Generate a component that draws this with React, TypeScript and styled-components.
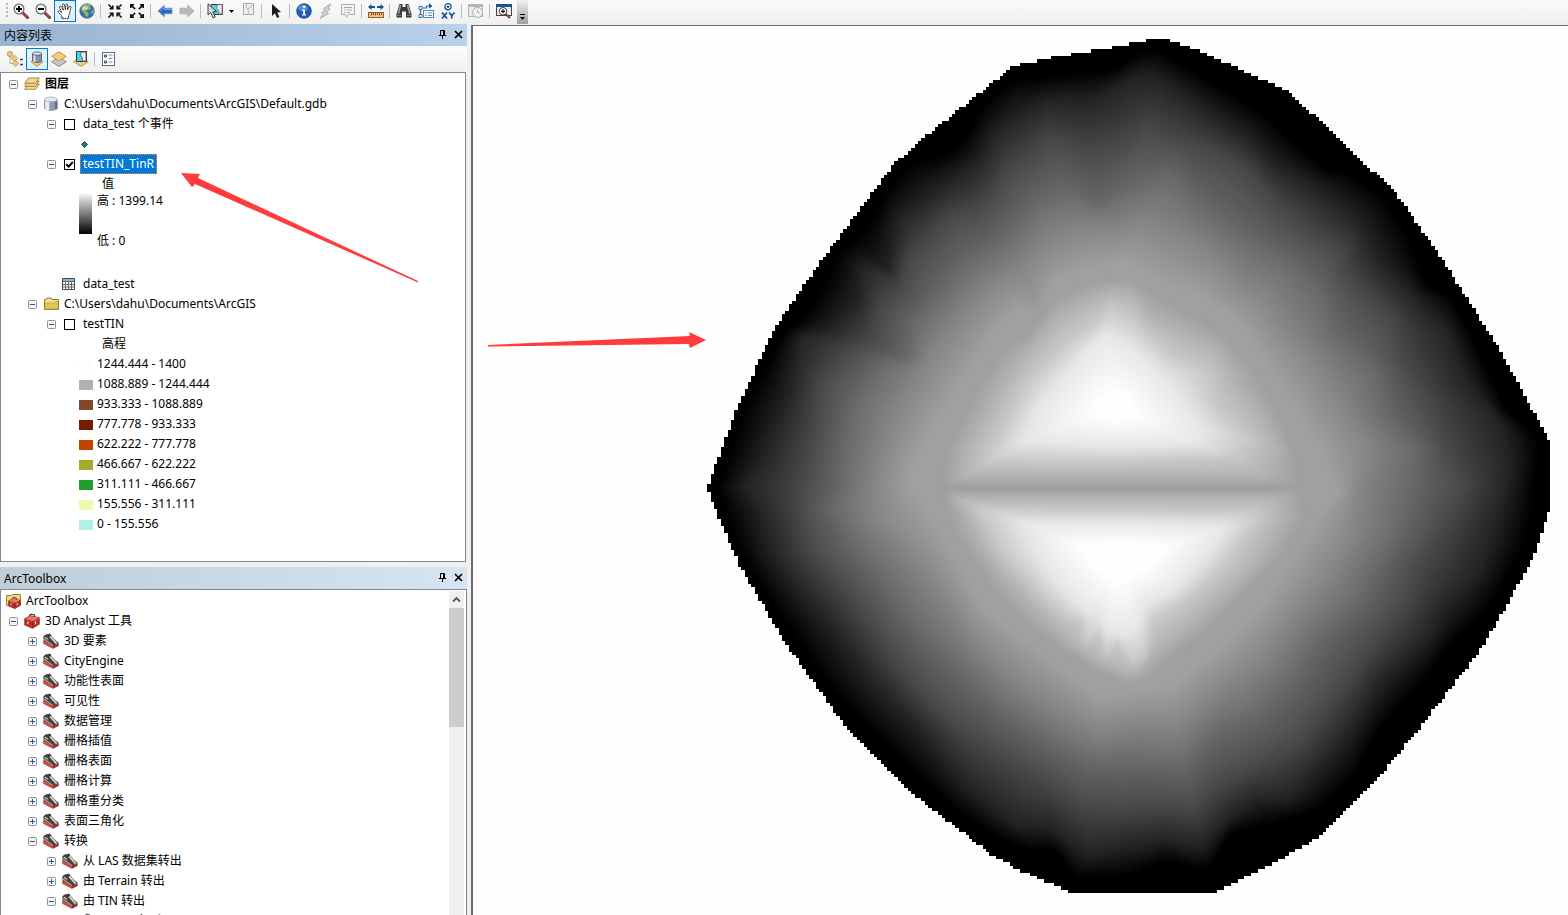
import React from "react";
import styled, { createGlobalStyle, css } from "styled-components";

const GlobalStyle = createGlobalStyle`
  * { box-sizing: border-box; }
  body {
    margin: 0;
    background: #f0f0f0;
    color: #000;
    font-family: "Noto Sans", "Noto Sans CJK SC", sans-serif;
    font-size: 12px;
    line-height: 20px;
  }
  button { font: inherit; color: inherit; }
`;

/* ---------- layout ---------- */

const Window = styled.div`
  display: flex;
  flex-direction: column;
  height: 100vh;
  overflow: hidden;
`;

const Toolbar = styled.div`
  display: flex;
  align-items: flex-start;
  flex: none;
  height: 24px;
  background: linear-gradient(#fafafa, #f0f0f0);
`;

const Workspace = styled.div`
  display: flex;
  flex: 1;
  min-height: 0;
`;

const Sidebar = styled.aside`
  position: relative;
  display: flex;
  flex-direction: column;
  flex: none;
  width: 467px;
`;

const MapFrame = styled.main`
  flex: 1;
  min-width: 0;
  margin: 1px 0 0 4px;
  border: solid #6b6b6b;
  border-width: 1px 0 0 2px;
  background: #fefefe;
  overflow: hidden;
`;

const MapDrawing = styled.svg`
  display: block;
  width: 100%;
`;

const Annotation = styled.svg`
  position: absolute;
  left: 180px;
  top: 148px;
  pointer-events: none;
`;

/* ---------- toolbar parts ---------- */

const Grip = styled.span`
  flex: none;
  width: 3px;
  height: 16px;
  margin: 3px 1px 0 6px;
  background: repeating-linear-gradient(#b4b4b4 0 2px, transparent 2px 4px);
  background-size: 2px 100%;
  background-repeat: no-repeat;
`;

const ToolButton = styled.button<{ $active?: boolean }>`
  display: flex;
  align-items: center;
  justify-content: center;
  flex: none;
  width: 22px;
  height: 22px;
  padding: 0;
  border: 1px solid transparent;
  background: transparent;
  ${(p) =>
    p.$active &&
    css`
      border-color: #0078d7;
      background: #e3eff9;
    `}
`;

const CaretButton = styled(ToolButton)`
  width: 11px;
`;

const Separator = styled.span`
  flex: none;
  width: 1px;
  height: 14px;
  margin: 4px 3px 0 2px;
  background: #bcbcbc;
`;

const Overflow = styled.button`
  display: flex;
  align-items: flex-end;
  justify-content: center;
  flex: none;
  width: 11px;
  height: 24px;
  margin-left: 2px;
  padding: 0 0 3px;
  border: 0;
  background: linear-gradient(#f0f0f0, #a0a0a0);
`;

/* ---------- panels ---------- */

const TitleBar = styled.header<{ $active?: boolean }>`
  display: flex;
  align-items: flex-start;
  flex: none;
  height: 22px;
  padding: 2px 1px 0 4px;
  background: ${(p) =>
    p.$active
      ? "linear-gradient(90deg, #99b4d1, #b9d1ea)"
      : "linear-gradient(90deg, #bfcddb, #d7e4f2)"};
`;

const Title = styled.h2`
  flex: 1;
  margin: 0;
  font-size: 12px;
  font-weight: 400;
`;

const TitleButton = styled.button`
  display: flex;
  align-items: center;
  justify-content: center;
  width: 16px;
  height: 17px;
  padding: 0;
  border: 0;
  background: transparent;
`;

const PanelTools = styled.div`
  display: flex;
  flex: none;
  height: 26px;
  padding: 2px 4px;
  background: linear-gradient(#fcfcfc, #f0f0f0);
`;

const LayersBox = styled.section`
  flex: none;
  height: 490px;
  margin: 0 1px 5px 0;
  padding-top: 1px;
  border: 1px solid #828790;
  background: #fff;
`;

const ToolboxBox = styled.section`
  display: flex;
  flex: 1;
  min-height: 0;
  padding: 1px 2px 0 0;
  border: 1px solid #828790;
  border-bottom: 0;
  background: #fff;
`;

const Tree = styled.ul`
  flex: 1;
  min-width: 0;
  margin: 0;
  padding: 0;
  list-style: none;
`;

const Row = styled.li<{ $level: number }>`
  display: flex;
  align-items: center;
  height: 20px;
  padding-left: ${(p) => p.$level * 19 + 8}px;
  white-space: pre;
`;

const Expander = styled.button`
  display: flex;
  flex: none;
  width: 9px;
  height: 9px;
  margin-right: 6px;
  padding: 0;
  border: 0;
  background: transparent;
`;

const IconCell = styled.span`
  display: flex;
  align-items: center;
  flex: none;
  width: 16px;
  height: 16px;
  margin-right: 5px;
`;

const Label = styled.span<{ $bold?: boolean }>`
  font-weight: ${(p) => (p.$bold ? 700 : 400)};
`;

const LayerLabel = styled.label<{ $selected?: boolean }>`
  padding: 0 2px;
  line-height: 18px;
  border: 1px solid transparent;
  ${(p) =>
    p.$selected &&
    css`
      color: #fff;
      background: #0078d7;
      border: 1px dotted #ff8728;
    `}
`;

const Check = styled.input`
  appearance: none;
  flex: none;
  width: 11px;
  height: 11px;
  margin: 0 5px 0 2px;
  border: 1px solid #000;
  background: #fff;
  &:checked {
    background: #fff
      url("data:image/svg+xml,%3Csvg xmlns='http://www.w3.org/2000/svg' width='9' height='9'%3E%3Cpath d='M1.3 4.3 3.6 6.6 7.8 2' fill='none' stroke='black' stroke-width='2'/%3E%3C/svg%3E");
  }
`;

const LegendRow = styled.li<{ $indent: number }>`
  display: flex;
  align-items: center;
  height: 20px;
  padding-left: ${(p) => p.$indent}px;
`;

const Swatch = styled.span<{ $color: string }>`
  flex: none;
  width: 14px;
  height: 10px;
  margin: 2px 4px 0 0;
  background: ${(p) => p.$color};
`;

const Stretch = styled.li`
  display: flex;
  height: 80px;
  padding-left: 78px;
`;

const Ramp = styled.span`
  width: 13px;
  height: 40px;
  margin-right: 5px;
  background: linear-gradient(#f4f4f4, #000);
`;

const RampLabels = styled.span`
  display: flex;
  flex-direction: column;
  justify-content: space-between;
  height: 60px;
  margin-top: -3px;
`;

const Scrollbar = styled.div`
  display: flex;
  flex-direction: column;
  flex: none;
  width: 15px;
  background: #f0f0f0;
`;

const ScrollUp = styled.button`
  display: flex;
  align-items: center;
  justify-content: center;
  height: 17px;
  padding: 0;
  border: 0;
  background: transparent;
`;

const Thumb = styled.div`
  height: 119px;
  background: #cdcdcd;
`;

/* ---------- icons ---------- */

const Svg = ({ children, size = 16 }: { children: React.ReactNode; size?: number }) => (
  <svg width={size} height={size} viewBox={`0 0 ${size} ${size}`} aria-hidden="true">
    {children}
  </svg>
);

const Magnifier = ({ plus }: { plus?: boolean }) => (
  <Svg>
    <path d="M9.5 9.5 14.5 14.5" stroke="#7b3424" strokeWidth="3" strokeLinecap="round" />
    <path d="M10 9.6 14.6 14" stroke="#b9705a" strokeWidth="1" />
    <circle cx="6" cy="6" r="4.9" fill="#f4f6f8" stroke="#6d7173" strokeWidth="1.3" />
    <path d="M3 6H9" stroke="#000" strokeWidth="2" />
    {plus && <path d="M6 3V9" stroke="#000" strokeWidth="2" />}
  </Svg>
);

const Hand = () => (
  <Svg>
    <path
      d="M5 15.3 4.6 12.6 1.2 9.2C.3 8 1.7 7.2 2.7 8.1L4.5 9.6 2.6 4.3C2.3 3 3.9 2.6 4.4 3.8L6.2 7.2 5.5 2C5.4.7 7.1.5 7.4 1.8L8.4 6.7 8.9 1.9C9.1.7 10.8.9 10.7 2.1L10.5 7 12.3 3.6C12.9 2.6 14.2 3.2 13.9 4.4L12.6 10.3 11.6 12.9 11.7 15.3Z"
      fill="#fff"
      stroke="#2a2a2a"
      strokeWidth="1"
      strokeDasharray="2 .5"
    />
  </Svg>
);

const Globe = () => (
  <Svg>
    <circle cx="8" cy="8" r="7.2" fill="#3470b4" stroke="#415a78" strokeWidth=".8" />
    <path d="M4 2.4C6 .8 10.2.6 12 2.4L10.8 4.2 12.3 5.4 10.4 6.8 8 6.4 6.8 8.4 9.2 9.4 9.8 11.6 8 14.6 6.2 12.4 5 9.8 2.5 8.1 2.6 5Z" fill="#8fb35c" />
    <path d="M12.6 8 14.8 6.8 14 10.6 12.6 10.8Z" fill="#a2bd61" />
    <ellipse cx="6" cy="5" rx="3" ry="2" fill="#e5f4ff" opacity=".6" />
  </Svg>
);

const cornerArrow = "M0 0H4V1.6H2.7L5.7 4.6 4.6 5.7 1.6 2.7V4H0Z";
const FourArrows = ({ inward }: { inward?: boolean }) => (
  <Svg>
    {[0, 90, 180, 270].map((a) => (
      <path
        key={a}
        d={cornerArrow}
        transform={`rotate(${a} 8 8) ${inward ? "translate(6.6 6.6) rotate(180)" : "translate(1 1)"}`}
        fill="#111"
      />
    ))}
  </Svg>
);

const BigArrow = ({ right }: { right?: boolean }) => (
  <Svg>
    <path
      d="M1 8 7.3 2.3V5.2H15V10.8H7.3V13.7Z"
      transform={right ? "matrix(-1 0 0 1 16 0)" : undefined}
      fill={right ? "#b9b9b9" : "#2c65bd"}
      stroke={right ? "#a9a9a9" : "#7f9cc8"}
      strokeWidth=".8"
    />
    {!right && <path d="M3 8 7 4.5V6.5H14" fill="none" stroke="#6fa0e6" strokeWidth="1" />}
  </Svg>
);

const SelectFeatures = () => (
  <Svg>
    <path d="M4 1.5H15.5V11.5H8L4 8Z" fill="#44d9f5" stroke="#3b3b3b" />
    <path d="M10.5 1.5 9.5 5.5 12 8.5 11.5 11H15.2V1.7Z" fill="#e9e9e9" stroke="#666" strokeWidth=".8" />
    <path d="M1 .8V12L3.8 9.5 6 15 8.2 14 6 8.8 9.5 8.4Z" fill="#d6d6d6" stroke="#333" strokeWidth=".9" />
  </Svg>
);

const ClearSelection = () => (
  <Svg>
    <path d="M3.5.5H13.5V11.5H3.5Z" fill="#efefef" stroke="#a9a9a9" />
    <path d="M7 .5 6 4 8.5 7.5 8 11.5M8 6 13 2" fill="none" stroke="#b5b5b5" />
  </Svg>
);

const Pointer = () => (
  <Svg>
    <path d="M4 1V13L7 10.3 9 15 11.4 14 9.3 9.4 13 9Z" fill="#1b1b1b" />
  </Svg>
);

const Info = () => (
  <Svg>
    <circle cx="8" cy="8" r="7.3" fill="#1f5bb8" stroke="#1a3f7d" strokeWidth=".8" />
    <ellipse cx="7" cy="5" rx="5" ry="3.3" fill="#6c9fe4" opacity=".7" />
    <circle cx="8.2" cy="3.8" r="1.3" fill="#fff" />
    <path d="M6 6.5H9V11.5H10.2V12.5H6V11.5H7.2V7.5H6Z" fill="#fff" />
  </Svg>
);

const Lightning = () => (
  <Svg>
    <path d="M13 .8 5.5 5.4 7.4 7 3.6 9.6 5.4 10.8 2.2 15.2 10.6 10.6 8.3 9.2 12.2 6.2 10 5.2Z" fill="#d4d4d4" stroke="#a8a8a8" strokeWidth=".9" />
  </Svg>
);

const Popup = () => (
  <Svg>
    <path d="M1.5 1.5H14.5V11.5H8.5L6.5 14.5 5.5 11.5H1.5Z" fill="#f3f3f3" stroke="#acacac" />
    <path d="M4 4.5H12M7 7H12M7 9.5H10M4 7H5.5M4 9.5H5.5" stroke="#a8a8a8" />
  </Svg>
);

const Measure = () => (
  <Svg>
    <path d="M0 4 3.5 1V3H7V5H3.5V7ZM16 4 12.5 1V3H9V5H12.5V7Z" fill="#12549c" />
    <rect x=".5" y="9.5" width="15" height="5" fill="#f0c28b" stroke="#9a5b25" />
    <path d="M3.5 10V12.5M5.5 10V12M7.5 10V12.5M9.5 10V12M11.5 10V12.5M13.5 10V12" stroke="#8a4d1c" />
  </Svg>
);

const Binoculars = () => (
  <Svg>
    <path d="M3.5 1H6.5V4H9.5V1H12.5L15.5 11V14.5H10V8.5H6V14.5H.5V11Z" fill="#3b3b3b" />
    <path d="M4.5 2 2.5 11M11.5 2 13.8 11" stroke="#a5a5a5" strokeWidth="1.4" />
    <path d="M1 12.5H5.5M10.5 12.5H15" stroke="#777" />
  </Svg>
);

const Route = () => (
  <Svg>
    <path d="M2.5 12V5H8.5V3H12" fill="none" stroke="#2b6ca8" strokeWidth="1.2" />
    <path d="M11 .3 14.5 3 11 5.5Z" fill="#12549c" />
    <path d="M1 3.5H4V6.5H1ZM1 11.5H4V14.5H1Z" fill="#fff" stroke="#2b6ca8" />
    <rect x="5.5" y="7.5" width="10" height="7" fill="#fff" stroke="#5a87ad" />
    <path d="M7 10H8.5M7 12.5H8.5M10 10H14M10 12.5H14" stroke="#5a87ad" />
  </Svg>
);

const GoToXY = () => (
  <Svg>
    <circle cx="8" cy="3.8" r="3.1" fill="#fff" stroke="#12549c" strokeWidth="1.3" />
    <circle cx="8" cy="3.8" r="1.2" fill="#12549c" />
    <path d="M2 9.5 7 15.5M7 9.5 2 15.5M9.2 9.5 11.7 12.7M14.5 9.5 11.7 12.7V15.5" fill="none" stroke="#12549c" strokeWidth="1.7" />
  </Svg>
);

const TimeSlider = () => (
  <Svg>
    <rect x=".5" y="1.5" width="14" height="12" fill="#ececec" stroke="#b3b3b3" />
    <path d="M1 3H14" stroke="#b8b8b8" strokeWidth="2" />
    <circle cx="9.5" cy="9.5" r="5" fill="#f3f3f3" stroke="#acacac" />
    <path d="M9.5 6.5V9.8H12" fill="none" stroke="#acacac" />
  </Svg>
);

const ViewerWindow = () => (
  <Svg>
    <rect x=".5" y="1.5" width="15" height="11" fill="#eee" stroke="#444" />
    <path d="M0 2.5H16" stroke="#1c4f9c" strokeWidth="3" />
    <path d="M9.5 11 14 15" stroke="#8b3c28" strokeWidth="2.2" />
    <circle cx="7" cy="8.3" r="3.8" fill="#fff" stroke="#3d3d3d" />
    <path d="M5 8.3H9M7 6.3V10.3" stroke="#000" strokeWidth="1.2" />
  </Svg>
);

const Caret = () => (
  <svg width="5" height="3" viewBox="0 0 5 3" aria-hidden="true">
    <path d="M0 0H5L2.5 3Z" />
  </svg>
);

const diamond = (y: number, fill: string, stroke: string) => (
  <path d={`M8 ${y} 15.3 ${y + 4.6} 8 ${y + 9.2} .7 ${y + 4.6}Z`} fill={fill} stroke={stroke} strokeWidth=".9" />
);

const ListByDrawing = () => (
  <Svg>
    <path d="M3 4V12.5H8M6 8H9" fill="none" stroke="#a8a8a8" />
    <circle cx="3" cy="3" r="2.6" fill="#f5c87a" stroke="#b88a42" strokeWidth=".8" />
    <path d="M7.5 4.2 10.6 7.3 7.5 10.4 4.4 7.3ZM8.5 9.2 11.6 12.3 8.5 15.4 5.4 12.3Z" fill="#f5c87a" stroke="#b88a42" strokeWidth=".8" />
    <path d="M13 8.5H16M13 13.5H16" stroke="#12549c" strokeWidth="1.5" />
  </Svg>
);

const ListBySource = () => (
  <Svg>
    <path d="M3 9.5H13L13.8 11 8 15.4 2.2 11Z" fill="#f6cd7d" stroke="#b98f45" strokeWidth=".9" />
    <path d="M3.5 2.5V10C4 12 12 12 12.5 10V2.5Z" fill="#8090a5" stroke="#4b5667" strokeWidth=".8" />
    <path d="M5.5 3V11" stroke="#d4deea" strokeWidth="2.2" />
    <ellipse cx="8" cy="2.6" rx="4.5" ry="1.7" fill="#dde5ee" stroke="#4b5667" strokeWidth=".8" />
  </Svg>
);

const ListByVisibility = () => (
  <Svg>
    {diamond(6.2, "#c9c9c9", "#7d7d7d")}
    {diamond(0.8, "#f6cd7d", "#b98f45")}
  </Svg>
);

const ListBySelection = () => (
  <Svg>
    {diamond(6.2, "#f6cd7d", "#b98f45")}
    <path d="M3.5.5H13.5V10.5H3.5Z" fill="#3ed5f2" stroke="#3b3b3b" />
    <path d="M8.5 1 7.5 4 9.5 7 9 10H13V1Z" fill="#f0f0f0" stroke="#555" strokeWidth=".8" />
  </Svg>
);

const Options = () => (
  <Svg>
    <rect x="1.5" y="1.5" width="12" height="13" fill="#fff" stroke="#51708f" />
    <path d="M3.5 4H5.5V6H3.5ZM3.5 10H5.5V12H3.5Z" fill="none" stroke="#333" strokeWidth=".9" />
    <path d="M7.5 4H11.5M7.5 7.5H11.5M7.5 11H11.5" stroke="#6f8dab" />
  </Svg>
);

const Pin = () => (
  <Svg size={9}>
    <path d="M2.5 5.5V.5H6.5V5.5M5.5 1V5M.8 5.5H8.2M4.5 5.5V9" fill="none" stroke="#000" />
  </Svg>
);

const Close = () => (
  <Svg size={9}>
    <path d="M1 1 8 8M8 1 1 8" stroke="#000" strokeWidth="1.7" />
  </Svg>
);

const ExpandMark = ({ open }: { open?: boolean }) => (
  <Svg size={9}>
    <rect x=".5" y=".5" width="8" height="8" rx="1" fill="#f5f5f5" stroke="#919191" />
    <path d={open ? "M2 4.5H7" : "M2 4.5H7M4.5 2V7"} stroke="#3553a4" />
  </Svg>
);

const LayersIcon = () => (
  <Svg>
    {[7.5, 4.5, 1.5].map((y) => (
      <path key={y} d={`M4.5 ${y + 0.5}H15.3L11.5 ${y + 5.8}H.7Z`} fill="#f7d590" stroke="#a67c35" strokeWidth=".9" />
    ))}
  </Svg>
);

const DatabaseIcon = () => (
  <Svg>
    <path d="M1.5 3.5V12.3C3 15.2 13 15.2 14.5 12.3V3.5Z" fill="#8d9db2" stroke="#8b97a8" strokeWidth=".7" />
    <path d="M4.3 4V14" stroke="#e8eef5" strokeWidth="4" />
    <path d="M13 4V13" stroke="#5d6f88" strokeWidth="2" />
    <ellipse cx="8" cy="3.4" rx="6.5" ry="2.4" fill="#e3e9f0" stroke="#9ba7b6" strokeWidth=".7" />
  </Svg>
);

const TableIcon = () => (
  <Svg>
    <path d="M.5 2.5H12.5V13.5H.5Z" fill="#fff" stroke="#444" />
    <path d="M1 4H12" stroke="#8fb4d8" strokeWidth="2" />
    <path d="M.5 5.5H12.5M.5 8.5H12.5M.5 11H12.5M3.5 5V13.5M6.5 5V13.5M9.5 5V13.5" stroke="#666" />
  </Svg>
);

const FolderIcon = () => (
  <Svg>
    <path d="M1.5 13.5V3.5H3L4 2H8L9 3.5H15.5V13.5Z" fill="#efe08a" stroke="#8d7a2c" />
    <path d="M2 13V7H11L13 5.5H15V13Z" fill="#dcc95c" stroke="#b5a040" strokeWidth=".7" />
  </Svg>
);

const BoxShape = () => (
  <>
    <path d="M5.5 4V2.2L7 1.2 10.5 2V4" fill="none" stroke="#3b3b3b" strokeWidth="1.2" />
    <path d="M.7 5.5 6.5 2.8 15.3 4.8V11.3L8.5 15.3.7 12Z" fill="#c7342b" stroke="#6f1c17" strokeWidth=".7" />
    <path d="M.9 5.6 6.5 3 15 4.9 8.6 8Z" fill="#e9776b" />
    <path d="M8.6 8.2V15M1 8.6 8.5 11.5 15 8.3" fill="none" stroke="#801f19" strokeWidth=".9" />
    <path d="M3.8 8.5V11M11.5 8.5V11" stroke="#e8e8e8" strokeWidth="1.2" />
  </>
);

const ToolboxIcon = () => (
  <Svg>
    <BoxShape />
  </Svg>
);

const ToolboxFolderIcon = () => (
  <Svg>
    <path d="M1.5 12.5V2.5H6L7 1.5H15.5V12.5Z" fill="#ecdc80" stroke="#9c8832" />
    <g transform="translate(3 3.4) scale(.8)">
      <BoxShape />
    </g>
  </Svg>
);

const ToolsetIcon = () => (
  <Svg>
    <path d="M.5 3 3.5 1 15.5 9.5V12L9.5 13.5.5 7.5Z" fill="#45423f" />
    <path d="M1 6 10 12.6" stroke="#b4aea6" strokeWidth="1.1" />
    <path d="M.4 7.6 9.6 13.2 15.6 11.4V13L10 15.8.4 10.8Z" fill="#a52a22" />
    <path d="M.4 7.8 9.7 13.4V15.6L.4 10.6Z" fill="#dc4c40" />
    <path d="M5.6 3.2 8 2.6 14.6 10.2 13 11.6Z" fill="#ded8c8" stroke="#6b665e" strokeWidth=".7" />
    <path d="M4 1.6 7 .4 8.4 2.4 5.4 4.6Z" fill="#3a3a3a" />
    <path d="M2 4.2 5 6.4" stroke="#d8d8d4" strokeWidth="1.1" />
  </Svg>
);

const HammerIcon = () => (
  <Svg>
    <path d="M2 3.5 6 1 9 2 6 4.5 13.5 13 12 14.5 4.5 6Z" fill="#666" stroke="#333" strokeWidth=".7" />
  </Svg>
);

const EventDot = () => (
  <Svg size={7}>
    <path d="M3.5.7 6.3 3.5 3.5 6.3.7 3.5Z" fill="#178a6c" stroke="#05231b" />
  </Svg>
);

/* ---------- raster surface ---------- */

type Pt = [number, number];

const parse = (s: string): Pt[] => s.split(" ").map((p) => p.split(",").map(Number) as Pt);

const OUTLINE = parse(
  "708,487 714,470 738,405 777,325 820,262 893,165 925,137 1013,66 1050,58 1120,46 1148,40 1165,39 1190,47 1240,69 1289,92 1330,130 1357,158 1392,187 1440,256 1500,350 1549,440 1549,512 1533,557 1500,617 1480,650 1420,727 1372,785 1320,836 1270,865 1213,893 1074,893 1020,870 990,853 915,795 850,732 787,645 738,562 714,505"
);

const CONTOURS: [number, Pt[]][] = [
  [0, parse("716,487 742,410 780,335 810,307 840,247 863,230 887,187 907,163 947,153 967,133 980,107 1007,80 1067,73 1117,67 1135,52 1157,46 1177,60 1217,83 1267,113 1294,140 1324,167 1354,173 1387,197 1411,237 1427,283 1454,297 1487,363 1507,410 1534,430 1542,450 1535,490 1535,513 1522,553 1489,613 1456,640 1422,687 1383,727 1355,780 1317,813 1267,827 1233,833 1208,873 1167,863 1128,877 1072,880 1056,850 1028,853 994,837 950,807 911,770 867,730 822,680 794,637 761,590 739,553 722,507")],
  [36, parse("745,487 760,463 790,390 800,337 827,330 857,303 863,263 887,270 900,217 947,183 977,163 997,130 1020,113 1050,100 1093,100 1130,80 1154,77 1177,90 1224,123 1251,140 1274,165 1304,180 1334,200 1361,223 1381,263 1421,303 1447,330 1467,380 1500,423 1511,463 1506,490 1494,530 1478,575 1444,610 1428,640 1383,680 1345,740 1318,770 1290,798 1256,800 1233,815 1200,847 1167,840 1128,847 1089,855 1048,827 1017,825 967,787 917,727 872,683 839,637 794,585 772,553 761,513")],
  [72, parse("800,487 813,430 820,380 847,350 870,340 880,307 900,287 910,257 947,217 977,207 993,193 1007,170 1033,153 1050,137 1087,150 1120,143 1147,127 1174,137 1221,153 1251,173 1281,207 1314,233 1341,247 1347,273 1394,320 1404,357 1434,407 1451,453 1467,487 1444,530 1422,565 1406,605 1367,655 1335,700 1300,745 1256,768 1217,787 1194,810 1161,807 1122,810 1083,807 1044,783 1000,757 950,723 917,690 883,645 850,598 810,553 797,507")],
  [105, parse("840,487 843,450 853,403 880,363 907,357 913,323 933,300 963,263 990,247 1013,227 1033,203 1067,190 1097,203 1130,187 1171,173 1194,197 1227,223 1264,247 1294,263 1321,293 1337,333 1377,373 1387,413 1417,450 1411,487 1400,530 1372,577 1361,600 1322,637 1294,680 1256,717 1217,733 1183,767 1139,763 1089,763 1056,747 1000,710 950,663 911,623 883,583 855,550 830,507")],
  [134, parse("872,487 880,457 893,413 913,383 933,350 960,317 987,287 1017,270 1053,237 1083,227 1117,227 1144,220 1177,233 1211,253 1244,283 1267,297 1287,327 1321,367 1347,410 1371,450 1361,487 1355,535 1328,580 1294,620 1261,662 1222,690 1178,727 1133,727 1100,733 1056,710 1017,683 978,647 938,592 911,557 875,520")],
  [160, parse("910,487 913,463 937,420 967,373 993,333 1020,307 1040,313 1053,280 1083,270 1127,260 1161,280 1204,297 1237,320 1264,357 1294,403 1321,450 1339,490 1317,523 1290,565 1256,613 1222,647 1172,687 1100,697 1061,670 1022,640 983,610 962,570 938,530 915,495")],
];

const UPPER: [number, Pt[]][] = [
  [160, parse("942,487 946,450 975,390 1005,345 1025,338 1053,300 1083,285 1127,275 1155,295 1200,318 1230,340 1255,370 1280,415 1296,455 1300,487")],
  [180, parse("962,476 968,450 1004,384 1040,338 1060,318 1085,302 1112,293 1135,298 1150,318 1180,332 1218,352 1237,388 1262,420 1276,448 1262,476 1115,476")],
  [200, parse("985,462 990,450 1027,380 1067,340 1090,325 1110,308 1130,315 1150,335 1171,353 1205,370 1219,407 1250,440 1237,458 1115,463")],
  [232, parse("1025,441 1040,405 1070,370 1085,352 1105,334 1128,345 1150,362 1175,390 1202,430 1195,444 1115,447")],
  [254, parse("1092,410 1100,397 1115,390 1128,398 1138,415 1115,422")],
];

const LOWER: [number, Pt[]][] = [
  [160, parse("942,489 1300,489 1306,515 1285,555 1240,600 1205,635 1172,658 1150,678 1130,686 1095,672 1061,650 1022,622 993,590 972,560 952,530")],
  [180, parse("957,498 1277,498 1282,518 1252,566 1218,598 1185,628 1156,650 1140,670 1125,672 1108,664 1094,658 1072,642 1035,608 1005,577 982,545")],
  [200, parse("978,508 1255,511 1259,521 1222,570 1180,606 1154,622 1146,655 1132,662 1118,646 1106,654 1098,636 1086,642 1080,622 1063,616 1033,587 1002,552")],
  [232, parse("1024,523 1036,552 1060,586 1080,604 1089,614 1096,610 1106,628 1122,634 1136,628 1146,604 1175,590 1208,553 1225,527 1133,522")],
  [254, parse("1078,545 1089,562 1117,585 1144,570 1168,547 1122,541")],
];

const RAYS = 240;

/** Distance from the centre to the outermost crossing of the polygon, for each ray. */
const radii = (poly: Pt[], cx: number, cy: number) =>
  Array.from({ length: RAYS }, (_, i) => {
    const a = (i / RAYS) * Math.PI * 2;
    const dx = Math.cos(a);
    const dy = Math.sin(a);
    let best = 0;
    poly.forEach(([x1, y1], k) => {
      const [x2, y2] = poly[(k + 1) % poly.length];
      const ex = x2 - x1;
      const ey = y2 - y1;
      const det = ex * dy - ey * dx;
      if (Math.abs(det) < 1e-6) return;
      const t = (ex * (y1 - cy) - ey * (x1 - cx)) / det;
      const u = (dx * (y1 - cy) - dy * (x1 - cx)) / det;
      if (u >= -1e-6 && u <= 1 + 1e-6 && t > best) best = t;
    });
    return best;
  });

const ringPath = (r: number[], cx: number, cy: number) =>
  r
    .map((d, i) => {
      const a = (i / RAYS) * Math.PI * 2;
      return `${i ? "L" : "M"}${(cx + d * Math.cos(a)).toFixed(1)} ${(cy + d * Math.sin(a)).toFixed(1)}`;
    })
    .join("") + "Z";

/** Fills the space between measured contours with evenly stepped grey bands. */
const bands = (levels: [number, Pt[]][], cx: number, cy: number) => {
  const out: { d: string; fill: string }[] = [];
  const rings = levels.map(([g, p]) => ({ g, r: radii(p, cx, cy) }));
  rings.forEach((from, k) => {
    const to = rings[k + 1];
    const steps = to ? Math.ceil((to.g - from.g) / 2) : 1;
    for (let s = 0; s < steps; s++) {
      const t = s / steps;
      const g = Math.round(to ? from.g + (to.g - from.g) * t : from.g);
      const r = from.r.map((v, i) => (to ? v + (to.r[i] - v) * t : v));
      out.push({ d: ringPath(r, cx, cy), fill: `rgb(${g},${g},${g})` });
    }
  });
  return out;
};

const CELL = 3.4;
const snap = (v: number) => Math.round(v / CELL) * CELL;

/** Raster footprint: one run of whole cells for each row. */
const footprint = () => {
  let d = "";
  for (let y = 39; y < 893; y += CELL) {
    const xs: number[] = [];
    const my = Math.min(y + CELL / 2, 892.5);
    OUTLINE.forEach(([x1, y1], k) => {
      const [x2, y2] = OUTLINE[(k + 1) % OUTLINE.length];
      if (y1 <= my !== y2 <= my) xs.push(x1 + ((my - y1) / (y2 - y1)) * (x2 - x1));
    });
    const a = snap(Math.min(...xs));
    const b = snap(Math.max(...xs));
    const h = Math.min(CELL + 0.5, 893 - y);
    d += `M${a.toFixed(1)} ${y.toFixed(1)}H${b.toFixed(1)}v${h.toFixed(1)}H${a.toFixed(1)}Z`;
  }
  return d;
};

const SURFACE = [
  ...bands(CONTOURS, 1118, 487),
  ...bands(UPPER, 1115, 408),
  ...bands(LOWER, 1118, 560),
];
const FOOTPRINT = footprint();

const RasterMap = () => (
  <MapDrawing viewBox="473 26 1095 889" role="img" aria-label="testTIN_TinR">
    <path d={FOOTPRINT} shapeRendering="crispEdges" />
    {SURFACE.map((b, i) => (
      <path key={i} d={b.d} fill={b.fill} />
    ))}
    <path d="M488 345 690 336 689 332 706 340 690 348 689 344 488 346.5Z" fill="#ff3b3b" />
  </MapDrawing>
);

/* ---------- data ---------- */

const CLASSES = [
  ["#fefcff", "1244.444 - 1400"],
  ["#b3b1b3", "1088.889 - 1244.444"],
  ["#7f4a2a", "933.333 - 1088.889"],
  ["#731d00", "777.778 - 933.333"],
  ["#c14400", "622.222 - 777.778"],
  ["#a8a82a", "466.667 - 622.222"],
  ["#1f9e2c", "311.111 - 466.667"],
  ["#edfbb0", "155.556 - 311.111"],
  ["#aff0e8", "0 - 155.556"],
];

const TOOLS: [number, boolean, string][] = [
  [1, false, "3D 要素"],
  [1, false, "CityEngine"],
  [1, false, "功能性表面"],
  [1, false, "可见性"],
  [1, false, "数据管理"],
  [1, false, "栅格插值"],
  [1, false, "栅格表面"],
  [1, false, "栅格计算"],
  [1, false, "栅格重分类"],
  [1, false, "表面三角化"],
  [1, true, "转换"],
  [2, false, "从 LAS 数据集转出"],
  [2, false, "由 Terrain 转出"],
  [2, true, "由 TIN 转出"],
];

const Twisty = ({ open, name }: { open?: boolean; name: string }) => (
  <Expander aria-expanded={!!open} aria-label={name}>
    <ExpandMark open={open} />
  </Expander>
);

const Tool = ({ name, active, children }: { name: string; active?: boolean; children: React.ReactNode }) => (
  <ToolButton $active={active} aria-label={name} aria-pressed={active}>
    {children}
  </ToolButton>
);

const PanelTitle = ({ text, active }: { text: string; active?: boolean }) => (
  <TitleBar $active={active}>
    <Title>{text}</Title>
    <TitleButton aria-label="自动隐藏">
      <Pin />
    </TitleButton>
    <TitleButton aria-label="关闭">
      <Close />
    </TitleButton>
  </TitleBar>
);

export default function App() {
  return (
    <Window>
      <GlobalStyle />
      <Toolbar role="toolbar" aria-label="工具">
        <Grip />
        <Tool name="放大"><Magnifier plus /></Tool>
        <Tool name="缩小"><Magnifier /></Tool>
        <Tool name="平移" active><Hand /></Tool>
        <Tool name="全图"><Globe /></Tool>
        <Separator />
        <Tool name="固定比例放大"><FourArrows inward /></Tool>
        <Tool name="固定比例缩小"><FourArrows /></Tool>
        <Separator />
        <Tool name="返回"><BigArrow /></Tool>
        <Tool name="前进"><BigArrow right /></Tool>
        <Separator />
        <Tool name="选择要素"><SelectFeatures /></Tool>
        <CaretButton aria-label="选择方式"><Caret /></CaretButton>
        <Tool name="清除所选要素"><ClearSelection /></Tool>
        <Separator />
        <Tool name="选择元素"><Pointer /></Tool>
        <Separator />
        <Tool name="识别"><Info /></Tool>
        <Tool name="超链接"><Lightning /></Tool>
        <Tool name="HTML 弹出窗口"><Popup /></Tool>
        <Separator />
        <Tool name="测量"><Measure /></Tool>
        <Separator />
        <Tool name="查找"><Binoculars /></Tool>
        <Tool name="查找路径"><Route /></Tool>
        <Tool name="转到 XY"><GoToXY /></Tool>
        <Separator />
        <Tool name="时间滑块"><TimeSlider /></Tool>
        <Separator />
        <Tool name="创建查看器窗口"><ViewerWindow /></Tool>
        <Overflow aria-label="工具栏选项">
          <svg width="7" height="7" viewBox="0 0 7 7" aria-hidden="true">
            <path d="M1 .5H6" stroke="#000" />
            <path d="M1 3H6L3.5 6Z" />
          </svg>
        </Overflow>
      </Toolbar>

      <Workspace>
        <Sidebar>
          <PanelTitle text="内容列表" active />
          <PanelTools>
            <Tool name="按绘制顺序列出"><ListByDrawing /></Tool>
            <Tool name="按源列出" active><ListBySource /></Tool>
            <Tool name="按可见性列出"><ListByVisibility /></Tool>
            <Tool name="按选择列出"><ListBySelection /></Tool>
            <Separator />
            <Tool name="选项"><Options /></Tool>
          </PanelTools>
          <LayersBox>
            <Tree>
              <Row $level={0}>
                <Twisty open name="图层" />
                <IconCell><LayersIcon /></IconCell>
                <Label $bold>图层</Label>
              </Row>
              <Row $level={1}>
                <Twisty open name="Default.gdb" />
                <IconCell><DatabaseIcon /></IconCell>
                <Label>C:\Users\dahu\Documents\ArcGIS\Default.gdb</Label>
              </Row>
              <Row $level={2}>
                <Twisty open name="data_test 个事件" />
                <Check type="checkbox" id="events" />
                <LayerLabel htmlFor="events">data_test 个事件</LayerLabel>
              </Row>
              <LegendRow $indent={80}><EventDot /></LegendRow>
              <Row $level={2}>
                <Twisty open name="testTIN_TinR" />
                <Check type="checkbox" id="tinr" defaultChecked />
                <LayerLabel htmlFor="tinr" $selected>testTIN_TinR</LayerLabel>
              </Row>
              <LegendRow $indent={101}>值</LegendRow>
              <Stretch>
                <Ramp />
                <RampLabels>
                  <span>高 : 1399.14</span>
                  <span>低 : 0</span>
                </RampLabels>
              </Stretch>
              <LegendRow $indent={61}>
                <IconCell><TableIcon /></IconCell>
                <Label>data_test</Label>
              </LegendRow>
              <Row $level={1}>
                <Twisty open name="ArcGIS" />
                <IconCell><FolderIcon /></IconCell>
                <Label>C:\Users\dahu\Documents\ArcGIS</Label>
              </Row>
              <Row $level={2}>
                <Twisty open name="testTIN" />
                <Check type="checkbox" id="tin" />
                <LayerLabel htmlFor="tin">testTIN</LayerLabel>
              </Row>
              <LegendRow $indent={101}>高程</LegendRow>
              {CLASSES.map(([color, range]) => (
                <LegendRow key={range} $indent={78}>
                  <Swatch $color={color} />
                  {range}
                </LegendRow>
              ))}
            </Tree>
          </LayersBox>

          <PanelTitle text="ArcToolbox" />
          <ToolboxBox>
            <Tree>
              <LegendRow $indent={4}>
                <IconCell><ToolboxFolderIcon /></IconCell>
                <Label>ArcToolbox</Label>
              </LegendRow>
              <Row $level={0}>
                <Twisty open name="3D Analyst 工具" />
                <IconCell><ToolboxIcon /></IconCell>
                <Label>3D Analyst 工具</Label>
              </Row>
              {TOOLS.map(([level, open, name]) => (
                <Row key={name} $level={level}>
                  <Twisty open={open} name={name} />
                  <IconCell><ToolsetIcon /></IconCell>
                  <Label>{name}</Label>
                </Row>
              ))}
              <LegendRow $indent={80}>
                <IconCell><HammerIcon /></IconCell>
                <Label>TIN 三角形</Label>
              </LegendRow>
            </Tree>
            <Scrollbar>
              <ScrollUp aria-label="向上滚动">
                <svg width="9" height="7" viewBox="0 0 9 7" aria-hidden="true">
                  <path d="M1 5.5 4.5 2 8 5.5" fill="none" stroke="#555" strokeWidth="1.8" />
                </svg>
              </ScrollUp>
              <Thumb />
            </Scrollbar>
          </ToolboxBox>
          <Annotation width="240" height="112" viewBox="180 172 240 112" aria-hidden="true">
            <path d="M181 173 200 174 198 178 418 281 418 282.5 195 184 192 187Z" fill="#ff3b3b" />
          </Annotation>
        </Sidebar>
        <MapFrame>
          <RasterMap />
        </MapFrame>
      </Workspace>
    </Window>
  );
}
